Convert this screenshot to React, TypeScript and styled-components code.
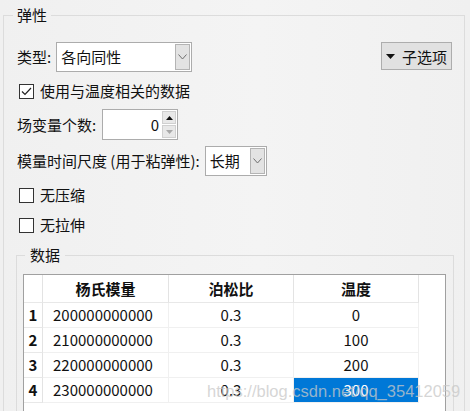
import { createGlobalStyle, styled } from "styled-components";

const GlobalStyle = createGlobalStyle`
  html, body {
    margin: 0;
    padding: 0;
    background: #f0f0f0;
  }
  body {
    font-family: "Noto Sans CJK SC", "Noto Sans", sans-serif;
    font-size: 15px;
    color: #111;
  }
`;

const rows = [
  { id: 1, modulus: "200000000000", poisson: "0.3", temp: "0" },
  { id: 2, modulus: "210000000000", poisson: "0.3", temp: "100" },
  { id: 3, modulus: "220000000000", poisson: "0.3", temp: "200" },
  { id: 4, modulus: "230000000000", poisson: "0.3", temp: "300" },
];

function Chevron() {
  return (
    <svg width="9" height="6" viewBox="0 0 9 6">
      <polyline points="0.5,0.5 4.5,5 8.5,0.5" fill="none" stroke="#707070" strokeWidth="1" />
    </svg>
  );
}

function ComboBox({ value, width }: { value: string; width: number }) {
  return (
    <Combo $width={width}>
      <ComboText>{value}</ComboText>
      <ComboArrow>
        <Chevron />
      </ComboArrow>
    </Combo>
  );
}

function CheckBox({ checked, label, top }: { checked?: boolean; label: string; top: number }) {
  return (
    <CheckRow $top={top}>
      <Box>
        {checked && (
          <svg width="13" height="13" viewBox="0 0 13 13">
            <polyline points="2,6.5 5,9.5 11,3" fill="none" stroke="#222" strokeWidth="1.2" />
          </svg>
        )}
      </Box>
      <CheckLabel>{label}</CheckLabel>
    </CheckRow>
  );
}

export default function App() {
  return (
    <>
      <GlobalStyle />
      <Window>
        <OuterGroup>
          <OuterLegend>弹性</OuterLegend>
          <Body>
            <FieldRow>
              <Label>类型:</Label>
              <ComboBox value="各向同性" width={136} />
              <Spacer />
              <SubButton>
                <svg width="9" height="5" viewBox="0 0 9 5">
                  <polygon points="0,0 9,0 4.5,5" fill="#111" />
                </svg>
                子选项
              </SubButton>
            </FieldRow>
            <CheckBox checked top={9} label="使用与温度相关的数据" />
            <SpinRow>
              <Label>场变量个数:</Label>
              <SpinBox>
                <SpinValue>0</SpinValue>
                <SpinButtons>
                  <SpinButton>
                    <svg width="7" height="4" viewBox="0 0 7 4">
                      <polygon points="0,4 7,4 3.5,0" fill="#111" />
                    </svg>
                  </SpinButton>
                  <SpinButton>
                    <svg width="7" height="4" viewBox="0 0 7 4">
                      <polygon points="0,0 7,0 3.5,4" fill="#a8a8a8" />
                    </svg>
                  </SpinButton>
                </SpinButtons>
              </SpinBox>
            </SpinRow>
            <ModRow>
              <Label>模量时间尺度 (用于粘弹性):</Label>
              <ComboBox value="长期" width={62} />
            </ModRow>
            <CheckBox top={9} label="无压缩" />
            <CheckBox top={10} label="无拉伸" />
            <DataGroup>
              <DataLegend>数据</DataLegend>
              <Table>
                <Grid>
                  <Cell $head />
                  <Cell $head>杨氏模量</Cell>
                  <Cell $head>泊松比</Cell>
                  <Cell $head>温度</Cell>
                  {rows.map((r) => (
                    <Row key={r.id}>
                      <Cell $rowHead>{r.id}</Cell>
                      <Cell $align="left">{r.modulus}</Cell>
                      <Cell>{r.poisson}</Cell>
                      <Cell $selected={r.id === 4}>{r.temp}</Cell>
                    </Row>
                  ))}
                </Grid>
              </Table>
            </DataGroup>
          </Body>
        </OuterGroup>
        <Watermark>https://blog.csdn.net/qq_35412059</Watermark>
      </Window>
    </>
  );
}

const Window = styled.div`
  position: relative;
  width: 470px;
  height: 411px;
  overflow: hidden;
  padding-top: 6px;
  box-sizing: border-box;
  background: linear-gradient(90deg, #f0f0f0, #f4f4f4 55%, #f0f0f0);
`;

const OuterGroup = styled.fieldset`
  margin: 0 0 0 3px;
  width: 462px;
  height: 460px;
  box-sizing: border-box;
  border: 1px solid #dcdcdc;
  padding: 18px 10px 0 12px;
  min-width: 0;
`;

const OuterLegend = styled.legend`
  font-size: 15px;
  line-height: 18px;
  padding: 0 4px;
  margin-left: -3px;
  color: #111;
`;

const Body = styled.div`
  display: flex;
  flex-direction: column;
`;

const FieldRow = styled.div`
  display: flex;
  align-items: flex-start;
  height: 30px;
  padding-left: 1px;
`;

const Label = styled.span`
  line-height: 30px;
  white-space: nowrap;
  margin-right: 5px;
`;

const Spacer = styled.div`
  flex: 1;
`;

const Combo = styled.div<{ $width: number }>`
  width: ${(p) => p.$width}px;
  height: 30px;
  box-sizing: border-box;
  border: 1px solid #acacac;
  background: #fff;
  display: flex;
  align-items: stretch;
`;

const ComboText = styled.span`
  flex: 1;
  padding-left: 4px;
  line-height: 28px;
  white-space: nowrap;
`;

const ComboArrow = styled.span`
  width: 15px;
  margin: 1px;
  box-sizing: border-box;
  border: 1px solid #b4b4b4;
  background: #e3e3e3;
  display: flex;
  align-items: center;
  justify-content: center;
`;

const SubButton = styled.div`
  width: 71px;
  height: 28px;
  margin-right: 2px;
  box-sizing: border-box;
  border: 1px solid #adadad;
  background: #e1e1e1;
  display: flex;
  align-items: center;
  justify-content: center;
  gap: 7px;
  white-space: nowrap;

  svg {
    margin-top: 1px;
  }
`;

const CheckRow = styled.div<{ $top: number }>`
  display: flex;
  align-items: center;
  height: 20px;
  margin-top: ${(p) => p.$top}px;
  padding-left: 3px;
`;

const Box = styled.span`
  width: 15px;
  height: 15px;
  box-sizing: border-box;
  border: 1px solid #333;
  background: #fff;
  display: flex;
  align-items: center;
  justify-content: center;
`;

const CheckLabel = styled.span`
  margin-left: 6px;
  line-height: 20px;
  white-space: nowrap;
`;

const SpinRow = styled(FieldRow)`
  margin-top: 8px;
  height: 31px;
  align-items: center;
`;

const SpinBox = styled.div`
  width: 76px;
  height: 31px;
  margin-left: 1px;
  box-sizing: border-box;
  border: 1px solid #acacac;
  background: #fff;
  display: flex;
`;

const SpinValue = styled.span`
  flex: 1;
  text-align: right;
  padding-right: 3px;
  line-height: 29px;
`;

const SpinButtons = styled.div`
  width: 14px;
  margin: 1px 1px 1px 0;
  display: flex;
  flex-direction: column;
  gap: 1px;
`;

const SpinButton = styled.div`
  flex: 1;
  box-sizing: border-box;
  border: 1px solid #d0d0d0;
  background: #e8e8e8;
  display: flex;
  align-items: center;
  justify-content: center;
`;

const ModRow = styled(FieldRow)`
  margin-top: 6px;
`;

const DataGroup = styled.fieldset`
  margin: 12px 0 0 0;
  width: 438px;
  height: 220px;
  box-sizing: border-box;
  border: 1px solid #dcdcdc;
  padding: 11px 0 0 6px;
  min-width: 0;
`;

const DataLegend = styled.legend`
  font-size: 15px;
  line-height: 16px;
  padding: 0 5px;
  margin-left: 2px;
  color: #111;
`;

const Table = styled.div`
  width: 423px;
  height: 160px;
  box-sizing: border-box;
  border: 1px solid #a0a0a0;
  background: #fff;
`;

const Grid = styled.div`
  display: grid;
  grid-template-columns: 19px 126px 125px 125px;
  grid-template-rows: 28px repeat(4, 25px);
`;

const Row = styled.div`
  display: contents;
`;

const Cell = styled.div<{
  $head?: boolean;
  $rowHead?: boolean;
  $align?: "left" | "center";
  $selected?: boolean;
}>`
  box-sizing: border-box;
  display: flex;
  align-items: center;
  justify-content: ${(p) => (p.$align === "left" ? "flex-start" : "center")};
  padding-left: ${(p) => (p.$align === "left" ? "10px" : "0")};
  border-right: 1px solid ${(p) => (p.$head || p.$rowHead ? "#e3e3e3" : "#f0f0f0")};
  border-bottom: 1px solid ${(p) => (p.$head || p.$rowHead ? "#e8e8e8" : "#f0f0f0")};
  font-weight: ${(p) => (p.$head || p.$rowHead ? 700 : 400)};
  background: ${(p) => (p.$selected ? "#0078d7" : "#fff")};
  color: ${(p) => (p.$selected ? "#fff" : "#111")};
  line-height: 20px;
  white-space: nowrap;
`;

const Watermark = styled.div`
  position: absolute;
  left: 207px;
  top: 381px;
  font-family: "Liberation Sans", Arial, sans-serif;
  font-size: 16.5px;
  line-height: 20px;
  color: rgba(200, 200, 200, 0.75);
  white-space: nowrap;
  pointer-events: none;
`;
